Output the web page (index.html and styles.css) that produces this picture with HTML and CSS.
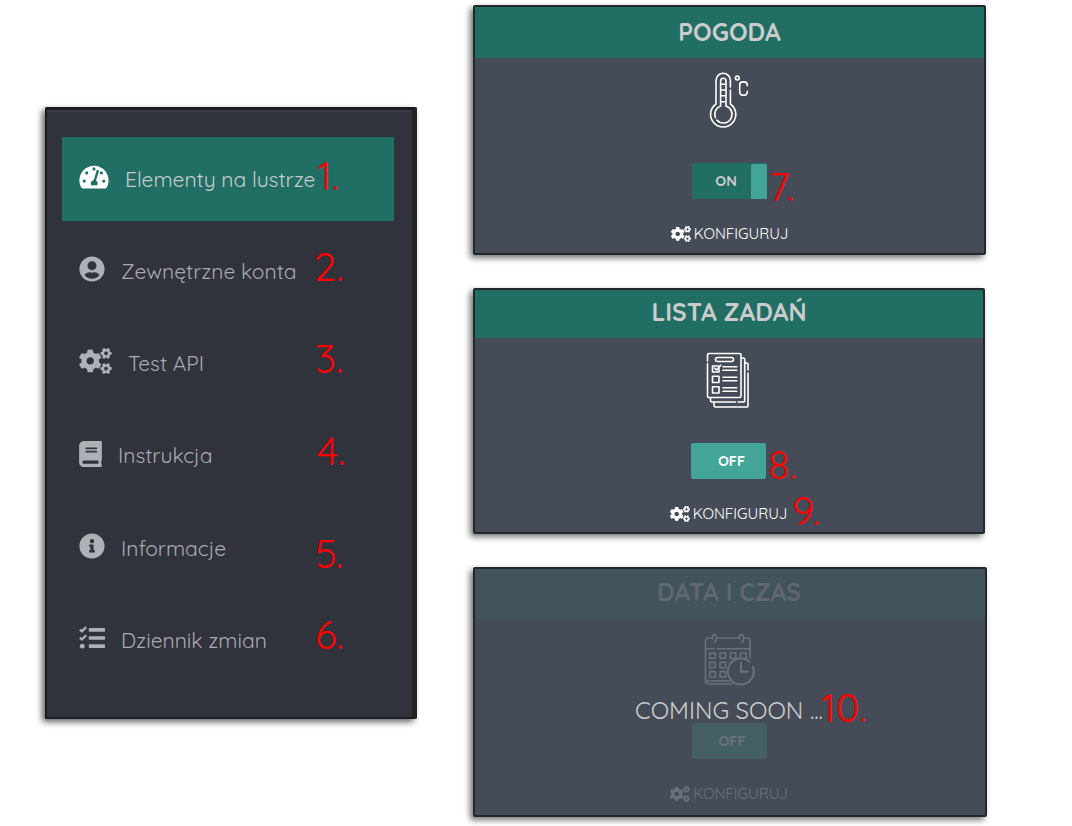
FILE: index.html
```html
<!DOCTYPE html>
<html lang="pl">
<head>
<meta charset="utf-8">
<title>Elementy na lustrze</title>
<link rel="stylesheet" href="styles.css">
</head>
<body>
<svg class="defs" aria-hidden="true">
  <symbol id="cogs" viewBox="0 0 640 512"><path d="M512.1 191l-8.2 14.3c-3 5.3-9.4 7.5-15.1 5.4-11.8-4.4-22.6-10.7-32.1-18.6-4.6-3.8-5.8-10.5-2.8-15.7l8.2-14.3c-6.9-8-12.3-17.3-15.9-27.4h-16.5c-6 0-11.2-4.3-12.2-10.3-2-12-2.1-24.6 0-37.1 1-6 6.2-10.4 12.2-10.4h16.5c3.6-10.1 9-19.4 15.9-27.4l-8.2-14.3c-3-5.2-1.9-11.9 2.8-15.7 9.5-7.9 20.4-14.2 32.1-18.6 5.7-2.1 12.1.1 15.1 5.4l8.2 14.3c10.5-1.9 21.2-1.9 31.7 0L552 6.3c3-5.3 9.4-7.5 15.1-5.4 11.8 4.4 22.6 10.7 32.1 18.6 4.6 3.8 5.8 10.5 2.8 15.7l-8.2 14.3c6.9 8 12.3 17.3 15.9 27.4h16.5c6 0 11.2 4.3 12.2 10.3 2 12 2.1 24.6 0 37.1-1 6-6.2 10.4-12.2 10.4h-16.5c-3.6 10.1-9 19.4-15.9 27.4l8.2 14.3c3 5.2 1.9 11.9-2.8 15.7-9.5 7.9-20.4 14.2-32.1 18.6-5.7 2.1-12.1-.1-15.1-5.4l-8.2-14.3c-10.4 1.9-21.2 1.9-31.7 0zm-10.5-58.8c38.5 29.6 82.4-14.3 52.8-52.8-38.5-29.7-82.4 14.3-52.8 52.8zM386.3 286.1l33.7 16.8c10.1 5.8 14.5 18.1 10.5 29.1-8.9 24.2-26.4 46.4-42.6 65.8-7.4 8.9-20.2 11.1-30.3 5.3l-29.1-16.8c-16 13.7-34.6 24.6-54.9 31.7v33.6c0 11.6-8.3 21.6-19.7 23.6-24.6 4.2-50.4 4.4-75.9 0-11.5-2-20-11.9-20-23.6V418c-20.3-7.2-38.9-18-54.9-31.7L74 403c-10 5.8-22.9 3.6-30.3-5.3-16.2-19.4-33.3-41.6-42.2-65.7-4-10.9.4-23.2 10.5-29.1l33.3-16.8c-3.9-20.9-3.9-42.4 0-63.4L12 205.8c-10.1-5.8-14.6-18.1-10.5-29 8.9-24.2 26-46.4 42.2-65.8 7.4-8.9 20.2-11.1 30.3-5.3l29.1 16.8c16-13.7 34.6-24.6 54.9-31.7V57.1c0-11.5 8.2-21.5 19.6-23.5 24.6-4.2 50.5-4.4 76-.1 11.5 2 20 11.9 20 23.6v33.6c20.3 7.2 38.9 18 54.9 31.7l29.1-16.8c10-5.8 22.9-3.6 30.3 5.3 16.2 19.4 33.2 41.6 42.1 65.8 4 10.9.1 23.2-10 29.1l-33.7 16.8c3.9 21 3.9 42.5 0 63.5zm-117.6 21.1c59.2-77-28.7-164.9-105.7-105.7-59.2 77 28.7 164.9 105.7 105.7zm243.4 182.7l-8.2 14.3c-3 5.3-9.4 7.5-15.1 5.4-11.8-4.4-22.6-10.7-32.1-18.6-4.6-3.8-5.8-10.5-2.8-15.7l8.2-14.3c-6.9-8-12.3-17.3-15.9-27.4h-16.5c-6 0-11.2-4.3-12.2-10.3-2-12-2.1-24.6 0-37.1 1-6 6.2-10.4 12.2-10.4h16.5c3.6-10.1 9-19.4 15.9-27.4l-8.2-14.3c-3-5.2-1.9-11.9 2.8-15.7 9.5-7.9 20.4-14.2 32.1-18.6 5.7-2.1 12.1.1 15.1 5.4l8.2 14.3c10.5-1.9 21.2-1.9 31.7 0l8.2-14.3c3-5.3 9.4-7.5 15.1-5.4 11.8 4.4 22.6 10.7 32.1 18.6 4.6 3.8 5.8 10.5 2.8 15.7l-8.2 14.3c6.9 8 12.3 17.3 15.9 27.4h16.5c6 0 11.2 4.3 12.2 10.3 2 12 2.1 24.6 0 37.1-1 6-6.2 10.4-12.2 10.4h-16.5c-3.6 10.1-9 19.4-15.9 27.4l8.2 14.3c3 5.2 1.9 11.9-2.8 15.7-9.5 7.9-20.4 14.2-32.1 18.6-5.7 2.1-12.1-.1-15.1-5.4l-8.2-14.3c-10.4 1.9-21.2 1.9-31.7 0zM501.6 431c38.5 29.6 82.4-14.3 52.8-52.8-38.5-29.6-82.4 14.3-52.8 52.8z"/></symbol>
</svg>
<main class="page">
  <nav class="sidebar">
    <a class="item active">
      <svg class="icon w30" viewBox="0 0 576 512"><path d="M288 32C128.94 32 0 160.94 0 320c0 52.8 14.25 102.26 39.06 144.8 5.61 9.62 16.3 15.2 27.44 15.2h443c11.14 0 21.83-5.58 27.44-15.2C561.75 422.26 576 372.8 576 320c0-159.06-128.94-288-288-288z"/><g class="cut"><circle cx="288" cy="96" r="31"/><circle cx="144" cy="176" r="31"/><circle cx="432" cy="176" r="31"/><circle cx="96" cy="336" r="31"/><circle cx="480" cy="336" r="31"/><path d="M338 132a24 24 0 0 1 46 15l-57 180c20 14 33 35 33 57 0 12-3 23-9 32H233c-6-9-9-20-9-32 0-36 26-62 58-64z"/></g></svg>
      <span class="label">Elementy na lustrze</span>
    </a>
    <a class="item">
      <svg class="icon w26" viewBox="0 0 496 512"><path d="M248 8C111 8 0 119 0 256s111 248 248 248 248-111 248-248S385 8 248 8zm0 96c48.6 0 88 39.4 88 88s-39.4 88-88 88-88-39.4-88-88 39.4-88 88-88zm0 344c-58.7 0-111.3-26.6-146.5-68.2 18.8-35.4 55.6-59.8 98.5-59.8 2.4 0 4.8.4 7.1 1.1 13 4.2 26.6 6.9 40.9 6.9 14.3 0 28-2.7 40.9-6.9 2.3-.7 4.7-1.1 7.1-1.1 42.9 0 79.7 24.4 98.5 59.8C359.3 421.4 306.7 448 248 448z"/></svg>
      <span class="label">Zewnętrzne konta</span>
    </a>
    <a class="item">
      <svg class="icon w33"><use href="#cogs"/></svg>
      <span class="label">Test API</span>
    </a>
    <a class="item">
      <svg class="icon w23" viewBox="0 0 448 512"><path d="M448 360V24c0-13.3-10.7-24-24-24H96C43 0 0 43 0 96v320c0 53 43 96 96 96h328c13.3 0 24-10.7 24-24v-16c0-7.5-3.5-14.3-8.9-18.7-4.2-15.4-4.2-59.3 0-74.7 5.4-4.3 8.9-11.1 8.9-18.6zM128 134c0-3.3 2.7-6 6-6h212c3.3 0 6 2.7 6 6v20c0 3.3-2.7 6-6 6H134c-3.3 0-6-2.7-6-6v-20zm0 64c0-3.3 2.7-6 6-6h212c3.3 0 6 2.7 6 6v20c0 3.3-2.7 6-6 6H134c-3.3 0-6-2.7-6-6v-20zm253.4 250H96c-17.7 0-32-14.3-32-32 0-17.6 14.4-32 32-32h285.4c-1.9 17.1-1.9 46.9 0 64z"/></svg>
      <span class="label">Instrukcja</span>
    </a>
    <a class="item">
      <svg class="icon w26" viewBox="8 0 496 512"><path d="M256 8C119.043 8 8 119.083 8 256c0 136.997 111.043 248 248 248s248-111.003 248-248C504 119.083 392.957 8 256 8zm0 110c23.196 0 42 18.804 42 42s-18.804 42-42 42-42-18.804-42-42 18.804-42 42-42zm56 254c0 6.627-5.373 12-12 12h-88c-6.627 0-12-5.373-12-12v-24c0-6.627 5.373-12 12-12h12v-64h-12c-6.627 0-12-5.373-12-12v-24c0-6.627 5.373-12 12-12h64c6.627 0 12 5.373 12 12v100h12c6.627 0 12 5.373 12 12v24z"/></svg>
      <span class="label">Informacje</span>
    </a>
    <a class="item">
      <svg class="icon w26" viewBox="0 0 512 512"><rect x="192" y="60" width="320" height="72" rx="16"/><rect x="192" y="220" width="320" height="72" rx="16"/><rect x="192" y="380" width="320" height="72" rx="16"/><circle cx="64" cy="416" r="48"/><path class="tick" d="M18 88l40 38 84-84M18 248l40 38 84-84"/></svg>
      <span class="label">Dziennik zmian</span>
    </a>
  </nav>

  <section class="cards">
    <article class="card">
      <h2 class="title">POGODA</h2>
      <div class="body">
        <svg class="pic" viewBox="0 0 61 60"><path d="M31.400 17V10.500a7.200 7.200 0 0 0-14.400 0V34a12.600 12.600 0 1 0 14.400 0V20"/><path d="M21.600 36V11a2.700 2.700 0 0 1 5.400 0V36M21.600 14.300H27M21.600 20H27M21.600 25.700H27M21.600 31.700H27"/><path d="M21.600 36a8.700 8.700 0 0 0-5.200 11.500M17.800 50A8.700 8.700 0 1 0 27 36"/><circle cx="38.300" cy="8" r="1.900"/><path d="M48.300 15.800v-.6a3.300 3.300 0 0 0-3.300-3.300h-1a3.300 3.300 0 0 0-3.300 3.300V22a3.300 3.300 0 0 0 3.300 3.300h1a3.300 3.300 0 0 0 3.300-3.300v-.6"/></svg>
        <button class="switch on"><span class="state">ON</span><span class="knob"></span></button>
        <a class="config"><svg class="gear"><use href="#cogs"/></svg><span>KONFIGURUJ</span></a>
      </div>
    </article>

    <article class="card second">
      <h2 class="title">LISTA ZADAŃ</h2>
      <div class="body">
        <svg class="pic" viewBox="0 0 61 60"><path d="M9.500 11V5a1.500 1.500 0 0 1 1.500-1.500H41.500A1.500 1.500 0 0 1 43 5V46a1.500 1.500 0 0 1-1.500 1.500H11A1.500 1.500 0 0 1 9.500 46V13.500"/><rect x="17.500" y="7.500" width="18" height="4" rx="2"/><path d="M14.500 16h6.500v6h-6.500zM14.500 26.300h6.500v6.200h-6.500zM14.500 36.700h6.500v6.300h-6.500z"/><path d="M16.500 18l2 2 4.300-4.700"/><path d="M25 16.700H38.800M25 20.300H38.800M25 27.300H38.800M25 30.700H38.800M25 37.700H38.800M25 41.300H38.800"/><path d="M43.500 8h1.700a1.500 1.500 0 0 1 1.500 1.500V50.500a1.500 1.500 0 0 1-1.500 1.500H40M37.500 52H14a1.500 1.500 0 0 1-1.500-1.500V48M47 13h1.500a1.500 1.500 0 0 1 1.500 1.500V20M50 23V55.500a1.500 1.500 0 0 1-1.500 1.500H17.500A1.500 1.500 0 0 1 16 55.500V52.500"/></svg>
        <button class="switch off"><span class="state">OFF</span></button>
        <a class="config"><svg class="gear"><use href="#cogs"/></svg><span>KONFIGURUJ</span></a>
      </div>
    </article>

    <article class="card soon">
      <h2 class="title">DATA I CZAS</h2>
      <div class="body">
        <svg class="pic" viewBox="0 0 61 60"><path d="M13 8H9.500a3 3 0 0 0-3 3V51a3 3 0 0 0 3 3H33M7 51H31M18 8H39.500M45 8h3a3 3 0 0 1 3 3V28M6.500 18.700H15M18 18.700H51M13.500 9V6.500a1.900 1.900 0 0 1 3.800 0V10a2 2 0 0 1-2 2M40.500 9V6.500a1.900 1.900 0 0 1 3.800 0V10a2 2 0 0 1-2 2"/><path d="M10.700 23h5.600v5.300h-5.600zM21 23h5.600v5.300H21zM31.200 23h5.600v5.300h-5.600zM41.500 28V23h5.600v5.300M10.700 32.300h5.600v5.400h-5.600zM21 32.300h5.600v5.400H21zM10.700 41.600h5.600v5.400h-5.600zM21 41.600h5.600v5.400H21z"/><path class="clock" d="M50.500 31.700A13 13 0 1 0 53.800 36.300M42 32.500V41.700H48.700"/></svg>
        <button class="switch off"><span class="state">OFF</span></button>
        <a class="config"><svg class="gear"><use href="#cogs"/></svg><span>KONFIGURUJ</span></a>
      </div>
      <p class="coming">COMING SOON ...</p>
    </article>
  </section>

  <span class="mark m1">1.</span>
  <span class="mark m2">2.</span>
  <span class="mark m3">3.</span>
  <span class="mark m4">4.</span>
  <span class="mark m5">5.</span>
  <span class="mark m6">6.</span>
  <span class="mark m7">7.</span>
  <span class="mark m8">8.</span>
  <span class="mark m9">9.</span>
  <span class="mark m10">10.</span>
</main>
</body>
</html>
```

FILE: styles.css
```css
* { box-sizing: border-box; }
body { margin: 0; background: #fff; font-family: Quicksand, Lato, sans-serif; }
.defs { position: absolute; width: 0; height: 0; }
.page { position: relative; display: flex; width: 1072px; height: 826px; overflow: hidden; }

.sidebar {
  width: 372px; height: 612px; margin: 107px 0 0 45px; padding: 27px 16px 0 15px;
  display: flex; flex-direction: column; gap: 8px;
  background: #30323c; border: 2px solid #1a1d22; border-right: 5px solid #232323;
  border-top-width: 3px; border-radius: 2px;
  box-shadow: -3px 3px 6px rgba(0,0,0,.6), inset 0 2px 0 #3a3c48;
}
.item { display: flex; align-items: center; height: 84.200px; width: 332px; padding: 0 17px 4px; color: #a9abb0; }
.item.active { background: #216e65; }
.icon { height: 26px; flex: none; fill: #adb0b5; }
.active .icon { fill: #fff; }
.active .cut { fill: #216e65; }
.tick { fill: none; stroke: #adb0b5; stroke-width: 44; }
.w30 { width: 30px; }
.w26 { width: 26px; }
.w33 { width: 33px; }
.w23 { width: 23px; }
.label { font-size: 21px; line-height: 26px; margin: 3.400px 0 0 16px; white-space: nowrap; font-weight: 400; }
.active .label { color: #c5cccb; }

.cards { display: flex; flex-direction: column; gap: 33px; margin: 5px 0 0 56px; }
.card {
  position: relative; width: 513px; height: 250px; background: #464c57;
  border: 2px solid #23282d; border-radius: 2px; display: flex; flex-direction: column;
  box-shadow: -3px 3px 6px rgba(0,0,0,.55);
}
.card.second { width: 512px; height: 246px; }
.card.soon { width: 514px; }
.title {
  margin: 0; height: 51px; padding-bottom: 10px; background: #216e65; color: #ccc;
  display: flex; align-items: flex-end; justify-content: center;
  font-size: 24.600px; line-height: 32px; font-weight: 700;
}
.second .title { height: 48px; }
.soon .title { height: 49px; padding-right: 2px; background: #41545b; color: #60676f; }
.body { display: flex; flex-direction: column; align-items: center; padding-top: 12px; }
.second .body { padding-right: 1px; }
.soon .body { padding-right: 2px; }
.pic { width: 61px; height: 60px; fill: none; stroke: #fff; stroke-width: 1.600; stroke-linecap: round; stroke-linejoin: round; }
.pic .clock { stroke-width: 2; }
.switch {
  display: flex; width: 75px; height: 36px; margin: 33px 0 0; padding: 0;
  border: 0; border-radius: 2px; font: 700 14.400px/36px Quicksand, Lato, sans-serif;
}
.switch.on { background: #216e65; color: #ccc; }
.switch.off { background: #43a597; color: #fff; }
.state { flex: 1; text-align: center; }
.on .state { padding-left: 9px; }
.off .state { padding-left: 6px; }
.knob { width: 16px; height: 35px; margin-top: 1px; border-radius: 2px 2px 0 0; background: #43a597; }
.config { display: flex; align-items: center; gap: 3px; height: 20px; margin: 25px 0 0; color: #fff; font-size: 15px; line-height: 19px; }
.config span { margin-top: -2px; }
.gear { width: 20px; height: 16px; fill: #fff; }
.soon .pic { stroke: #6b707a; }
.soon .switch { background: #456065; color: #6a747d; }
.soon .config { color: #6b707a; }
.soon .gear { fill: #6b707a; }
.coming { position: absolute; left: 160px; top: 125px; margin: 0; font-size: 24px; line-height: 32px; color: #ccc; white-space: nowrap; }

.mark { position: absolute; font-size: 40px; line-height: 48px; font-weight: 400; color: #f00; white-space: nowrap; }
.m1 { left: 317px; top: 151px; }
.m2 { left: 314px; top: 242px; }
.m3 { left: 315px; top: 334px; }
.m4 { left: 317px; top: 426px; }
.m5 { left: 315px; top: 529px; }
.m6 { left: 315px; top: 610px; }
.m7 { left: 769px; top: 162px; }
.m8 { left: 768px; top: 440px; }
.m9 { left: 792px; top: 486px; }
.m10 { left: 821px; top: 683px; }
```
